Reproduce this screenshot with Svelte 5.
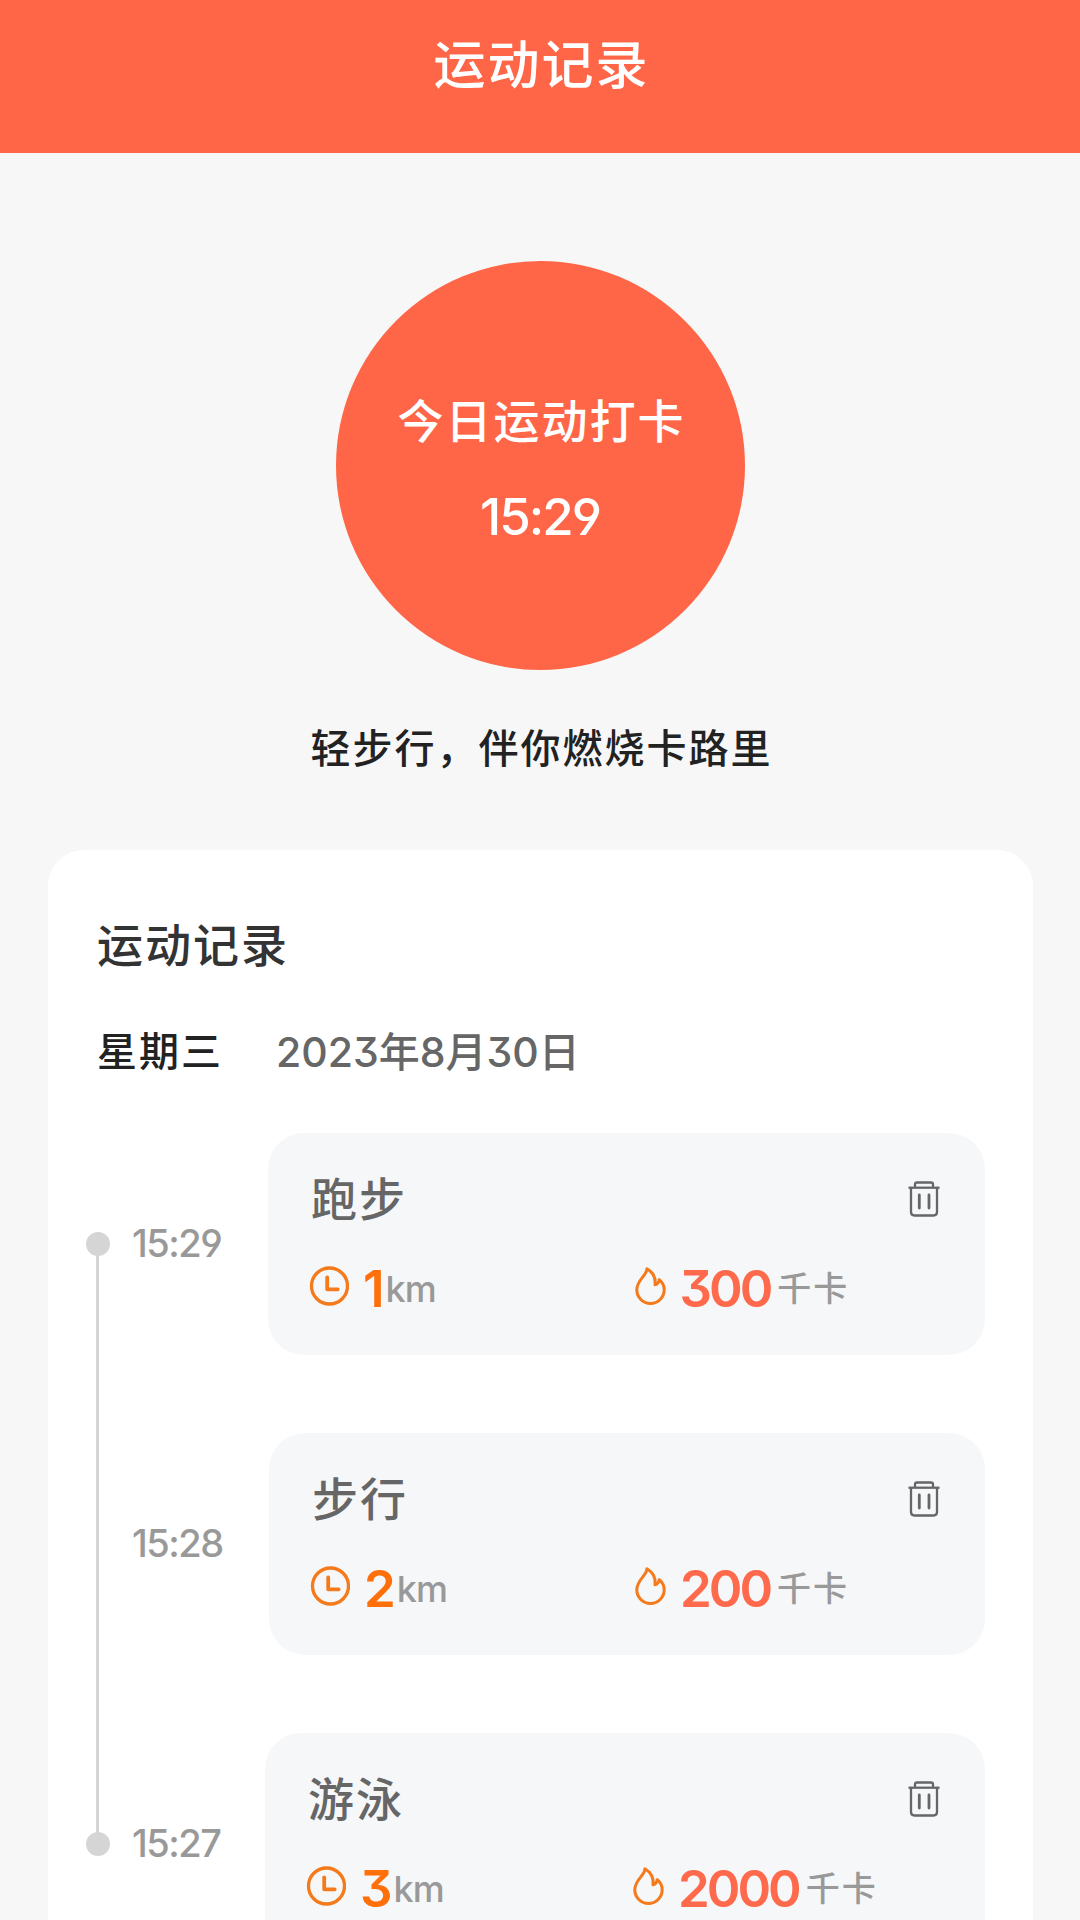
<script lang="ts">
    interface SportRecord {
        time: string;
        name: string;
        distance: number;
        calories: number;
        timeWidth: number;
        marked: boolean;
    }

    const title = '运动记录';
    const now = '15:29';

    let records: SportRecord[] = $state([
        { time: '15:29', name: '跑步', distance: 1, calories: 300, timeWidth: 136, marked: true },
        { time: '15:28', name: '步行', distance: 2, calories: 200, timeWidth: 137, marked: false },
        { time: '15:27', name: '游泳', distance: 3, calories: 2000, timeWidth: 133, marked: true }
    ]);

    function removeRecord(time: string) {
        records = records.filter((r) => r.time !== time);
    }
</script>

<div class="page">
    <header class="header">
        <h1>{title}</h1>
    </header>

    <section class="clock-in">
        <button class="clock-in-btn">
            <span class="clock-in-label">今日运动打卡</span>
            <span class="clock-in-time">{now}</span>
        </button>
        <p class="slogan">轻步行，伴你燃烧卡路里</p>
    </section>

    <section class="card">
        <h2>{title}</h2>
        <div class="date-row">
            <span class="weekday">星期三</span>
            <span class="date">2023年8月30日</span>
        </div>

        <ul class="timeline">
            {#each records as record (record.time)}
                <li class="row">
                    <div class="axis">
                        {#if record.marked}
                            <span class="dot"></span>
                        {/if}
                    </div>
                    <span class="time" style="width: {record.timeWidth}px">{record.time}</span>
                    <div class="record">
                        <div class="record-head">
                            <span class="name">{record.name}</span>
                            <button class="remove" aria-label="删除" onclick={() => removeRecord(record.time)}>
                                <svg width="32" height="36" viewBox="0 0 32 36" fill="none" stroke="#666" stroke-width="2.3">
                                    <path d="M.5 6.7h31" />
                                    <path d="M7 6V3.4Q7 1.5 9 1.5h14q2 0 2 1.9V6" />
                                    <path d="M3 7v24q0 3.5 3.5 3.5h19q3.5 0 3.5-3.5V7" />
                                    <path d="M11.3 14v13M21 14v13" stroke-width="2.8" stroke-linecap="round" />
                                </svg>
                            </button>
                        </div>
                        <div class="stats">
                            <div class="stat distance">
                                <svg width="40" height="40" viewBox="0 0 40 40" fill="none" stroke="#f47a1c">
                                    <circle cx="20.5" cy="20" r="18" stroke-width="3.3" />
                                    <path d="M18.2 11.5v11.8h10.500" stroke-width="3.8" stroke-linecap="round" stroke-linejoin="round" />
                                </svg>
                                <span class="value">{record.distance}</span>
                                <span class="unit km">km</span>
                            </div>
                            <div class="stat calories">
                                <svg width="32" height="40" viewBox="0 0 32 40" fill="none" stroke="#f47a1c" stroke-width="3" stroke-linejoin="round">
                                    <path d="M11.9 2.7C12.500 9 1.800 13.500 1.800 23.800a13.700 13.700 0 0 0 27.400 0c0-4.300-1.700-7.500-5-10.200-.3 3-1.400 4.600-4.200 5.200C21.100 11 17 5.700 11.900 2.700Z" />
                                </svg>
                                <span class="value">{record.calories}</span>
                                <span class="unit">千卡</span>
                            </div>
                        </div>
                    </div>
                </li>
            {/each}
        </ul>
    </section>
</div>

<style>
    :global(body) {
        background: #f7f7f7;
    }

    .page {
        height: 1920px;
        overflow: hidden;
        background: #f7f7f7;
        font-family: Inter, "Noto Sans CJK SC", sans-serif;
        font-feature-settings: "cv04", "cv09";
        font-weight: 500;
    }

    h1,
    h2,
    p,
    ul {
        margin: 0;
        padding: 0;
        font-weight: 500;
    }

    button {
        border: none;
        padding: 0;
        font: inherit;
        cursor: pointer;
    }

    svg {
        display: block;
    }

    .header {
        height: 153px;
        background: #ff6648;
        color: #fff;
        text-align: center;
    }

    .header h1 {
        padding: 34px 0 0 3px;
        font-size: 52px;
        line-height: 64px;
        letter-spacing: 2px;
    }

    .clock-in {
        display: flex;
        flex-direction: column;
        align-items: center;
        padding-top: 108px;
    }

    .clock-in-btn {
        display: flex;
        flex-direction: column;
        align-items: center;
        justify-content: center;
        gap: 36px;
        width: 409px;
        height: 409px;
        padding-top: 7px;
        border-radius: 50%;
        background: #ff6648;
        color: #fff;
    }

    .clock-in-label {
        padding-left: 3px;
        font-size: 46px;
        line-height: 60px;
        letter-spacing: 2px;
    }

    .clock-in-time {
        font-size: 51px;
        line-height: 60px;
        letter-spacing: -2px;
    }

    .slogan {
        margin-top: 49px;
        padding-left: 3px;
        font-size: 40px;
        line-height: 60px;
        letter-spacing: 2px;
        color: #222;
    }

    .card {
        margin: 71px 47px 0 48px;
        padding: 65px 48px 60px 38px;
        border-radius: 36px;
        background: #fff;
    }

    .card h2 {
        padding-left: 11px;
        font-size: 46px;
        line-height: 60px;
        letter-spacing: 2px;
        color: #333;
    }

    .date-row {
        display: flex;
        align-items: center;
        gap: 53px;
        padding-left: 11px;
        margin: 47px 0 51px;
        font-size: 40px;
        line-height: 60px;
    }

    .weekday {
        letter-spacing: 2px;
        color: #222;
    }

    .date {
        font-size: 41px;
        color: #666;
    }

    .timeline {
        position: relative;
        display: flex;
        flex-direction: column;
        gap: 78px;
        list-style: none;
    }

    .timeline::before {
        content: '';
        position: absolute;
        top: 111px;
        bottom: 111px;
        left: 10px;
        width: 3px;
        background: #d5d5d5;
    }

    .row {
        display: flex;
        align-items: center;
        height: 222px;
    }

    .axis {
        width: 46px;
    }

    .dot {
        position: relative;
        display: block;
        width: 24px;
        height: 24px;
        border-radius: 50%;
        background: #d5d5d5;
    }

    .time {
        flex-shrink: 0;
        padding-bottom: 2px;
        font-size: 38px;
        letter-spacing: -1.5px;
        color: #999;
    }

    .record {
        flex: 1;
        height: 222px;
        border-radius: 36px;
        background: #f6f7f9;
    }

    .record-head {
        display: flex;
        justify-content: space-between;
        align-items: center;
        height: 60px;
        padding: 36px 45px 0 43px;
    }

    .name {
        font-size: 46px;
        line-height: 60px;
        letter-spacing: 2px;
        color: #666;
    }

    .remove {
        background: none;
    }

    .stats {
        display: flex;
        margin-top: 30px;
    }

    .stat {
        box-sizing: border-box;
        display: flex;
        align-items: center;
        width: 50%;
        height: 60px;
    }

    .stat svg {
        margin-bottom: 6px;
    }

    .distance {
        padding-left: 41px;
    }

    .calories {
        padding-left: 8px;
    }

    .value {
        line-height: 60px;
        font-size: 51px;
    }

    .distance .value {
        margin-left: 14px;
        font-weight: 600;
        letter-spacing: -2px;
        color: #ff6f0a;
    }

    .calories .value {
        margin-left: 13px;
        font-weight: 600;
        letter-spacing: -3px;
        color: #ff6a4d;
    }

    .unit {
        margin: 0 0 5px 7px;
        font-size: 34px;
        letter-spacing: 2px;
        color: #999;
    }

    .km {
        margin: 0 0 0 3px;
        font-size: 36px;
        letter-spacing: -1px;
    }
</style>
